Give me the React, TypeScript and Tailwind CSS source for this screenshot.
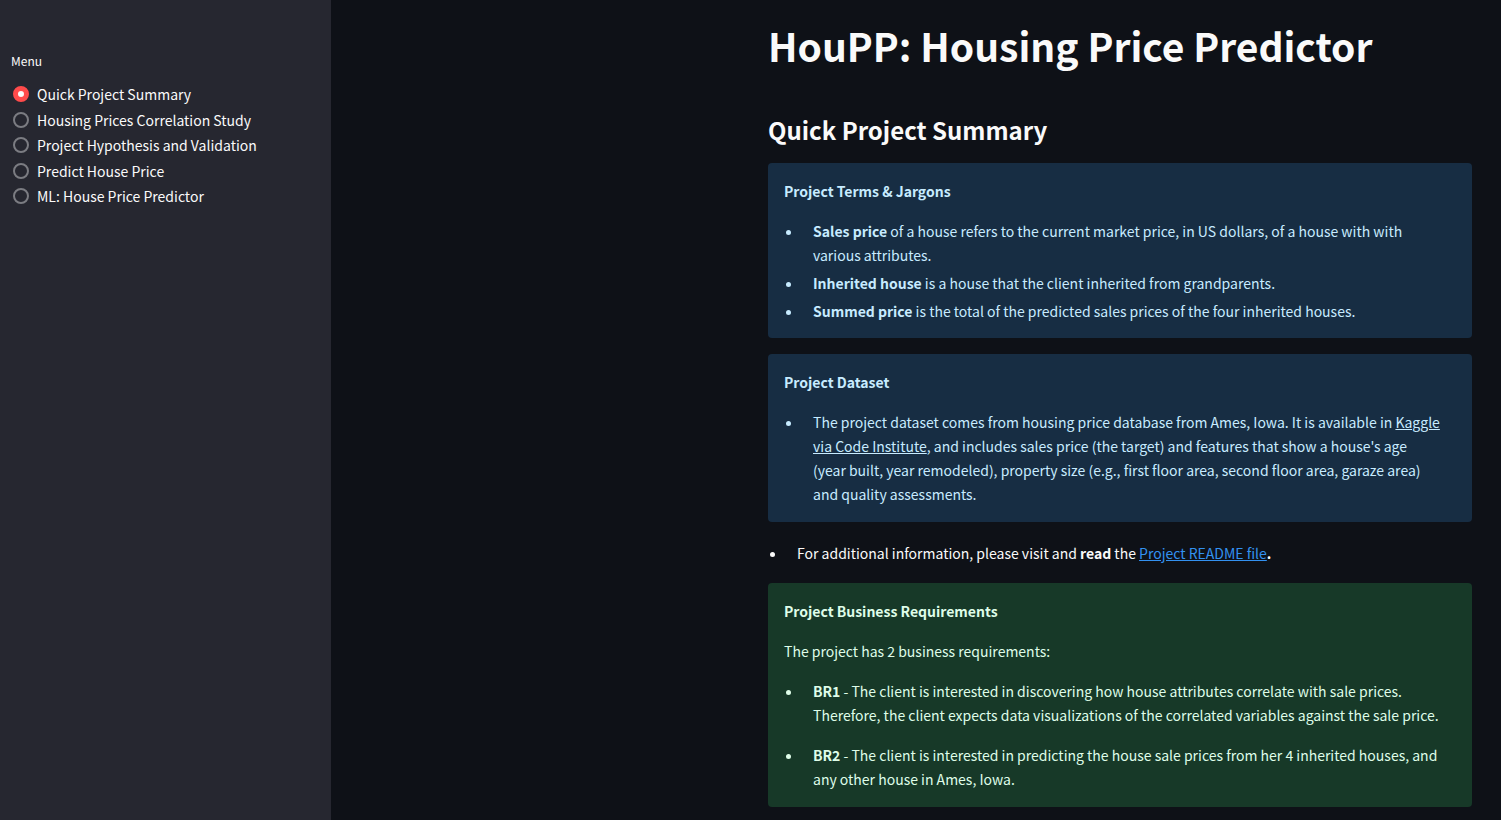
import { useState } from "react";
import type { ReactNode } from "react";

const pages = [
  "Quick Project Summary",
  "Housing Prices Correlation Study",
  "Project Hypothesis and Validation",
  "Predict House Price",
  "ML: House Price Predictor",
];

function Sidebar() {
  const [selected, setSelected] = useState(pages[0]);
  return (
    <aside className="w-[331px] shrink-0 bg-[#262730] px-[11px] pt-[51px]">
      <fieldset>
        <legend className="text-[12px] leading-5">Menu</legend>
        <div className="flex h-[137px] flex-col items-start justify-between pt-[11px]">
          {pages.map((page) => (
            <label key={page} className="flex cursor-pointer items-center gap-2 pl-[2px] leading-6">
              <input
                type="radio"
                name="page"
                checked={selected === page}
                onChange={() => setSelected(page)}
                className="size-4 appearance-none rounded-full border-2 border-[#7b7c82] checked:border-[5px] checked:border-[#ff4b4b] checked:bg-[#fafafa]"
              />
              {page}
            </label>
          ))}
        </div>
      </fieldset>
    </aside>
  );
}

function Alert({ tone, title, children }: { tone: "info" | "success"; title: string; children: ReactNode }) {
  const colors = tone === "info" ? "bg-[#172d43] text-[#c7ebff]" : "bg-[#173928] text-[#dffde9]";
  return (
    <section className={`flex flex-col gap-4 rounded p-4 ${colors}`}>
      <h3 className="font-bold">{title}</h3>
      {children}
    </section>
  );
}

export default function App() {
  return (
    <div className="flex min-h-screen bg-[#0e1117] font-['Noto_Sans_CJK_JP','Noto_Sans',sans-serif] text-[14px] leading-6 text-[#fafafa]">
      <Sidebar />
      <main className="flex min-w-0 flex-1 justify-end pr-[29px] pb-[13px]">
        <div className="flex w-full max-w-[704px] flex-col gap-4">
          <h1 className="pt-[19px] text-[39px] leading-[53px] font-bold">HouPP: Housing Price Predictor</h1>
          <h2 className="pt-[25px] text-[24px] leading-[34px] font-semibold">Quick Project Summary</h2>
          <Alert tone="info" title="Project Terms & Jargons">
            <ul className="-mb-px flex list-disc flex-col gap-1 pr-[15px] pl-[19px]">
              <li className="pl-[10px]">
                <strong>Sales price</strong> of a house refers to the current market price, in US dollars, of a house
                with with various attributes.
              </li>
              <li className="pl-[10px]">
                <strong>Inherited house</strong> is a house that the client inherited from grandparents.
              </li>
              <li className="pl-[10px]">
                <strong>Summed price</strong> is the total of the predicted sales prices of the four inherited houses.
              </li>
            </ul>
          </Alert>
          <Alert tone="info" title="Project Dataset">
            <ul className="list-disc pr-[15px] pl-[19px]">
              <li className="pl-[10px]">
                The project dataset comes from housing price database from Ames, Iowa. It is available in{" "}
                <a href="#kaggle" className="underline">Kaggle via Code Institute</a>, and includes sales price (the
                target) and features that show a house's age (year built, year remodeled), property size (e.g., first
                floor area, second floor area, garaze area) and quality assessments.
              </li>
            </ul>
          </Alert>
          <ul className="list-disc pt-[3px] pb-[2px] pl-[19px]">
            <li className="pl-[10px]">
              For additional information, please visit and <strong>read</strong> the{" "}
              <a href="#readme" className="text-[#3391f0] underline">Project README file</a>
              <strong>.</strong>
            </li>
          </ul>
          <Alert tone="success" title="Project Business Requirements">
            <p>The project has 2 business requirements:</p>
            <ul className="flex list-disc flex-col gap-4 pr-[15px] pl-[19px]">
              <li className="pl-[10px]">
                <strong>BR1</strong> - The client is interested in discovering how house attributes correlate with sale
                prices. Therefore, the client expects data visualizations of the correlated variables against the sale
                price.
              </li>
              <li className="pl-[10px]">
                <strong>BR2</strong> - The client is interested in predicting the house sale prices from her 4 inherited
                houses, and any other house in Ames, Iowa.
              </li>
            </ul>
          </Alert>
        </div>
      </main>
    </div>
  );
}
